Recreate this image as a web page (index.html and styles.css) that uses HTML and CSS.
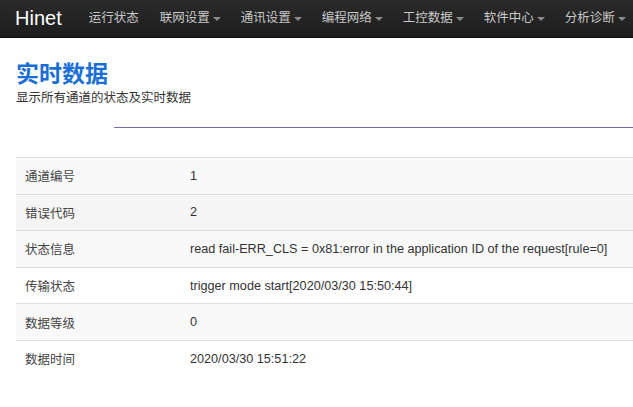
FILE: index.html
```html
<!DOCTYPE html>
<html lang="zh-CN">
<head>
<meta charset="utf-8">
<title>Hinet</title>
<link rel="stylesheet" href="styles.css">
</head>
<body>
<div class="navbar">
  <a class="brand">Hinet</a>
  <ul class="nav">
    <li><a>运行状态</a></li>
    <li><a>联网设置<b class="caret"></b></a></li>
    <li><a>通讯设置<b class="caret"></b></a></li>
    <li><a>编程网络<b class="caret"></b></a></li>
    <li><a>工控数据<b class="caret"></b></a></li>
    <li><a>软件中心<b class="caret"></b></a></li>
    <li><a>分析诊断<b class="caret"></b></a></li>
  </ul>
</div>
<div class="content">
  <div class="page-header">
    <h1 class="title">实时数据</h1>
    <p class="subtitle">显示所有通道的状态及实时数据</p>
  </div>
  <div class="divider"></div>
  <table class="data-table">
    <tr class="odd"><td class="label">通道编号</td><td>1</td></tr>
    <tr class="hover"><td class="label">错误代码</td><td>2</td></tr>
    <tr class="odd"><td class="label">状态信息</td><td>read fail-ERR_CLS = 0x81:error in the application ID of the request[rule=0]</td></tr>
    <tr><td class="label">传输状态</td><td>trigger mode start[2020/03/30 15:50:44]</td></tr>
    <tr class="odd"><td class="label">数据等级</td><td>0</td></tr>
    <tr><td class="label">数据时间</td><td>2020/03/30 15:51:22</td></tr>
  </table>
</div>
</body>
</html>
```
FILE: styles.css
```css
html, body {
  margin: 0;
  padding: 0;
  background: #fff;
  font-family: "Liberation Sans", "Noto Sans CJK SC", sans-serif;
  font-size: 13px;
  color: #333;
  overflow: hidden;
}
.navbar {
  height: 37px;
  background: linear-gradient(#2a2a2a, #1d1d1d);
  border-bottom: 1px solid #0c0c0c;
  display: flex;
  align-items: center;
  white-space: nowrap;
}
.brand {
  color: #fff;
  font-size: 20px;
  padding: 0 17px 0 15px;
  line-height: 37px;
}
.nav {
  display: flex;
  list-style: none;
  margin: 0;
  padding: 0;
}
.nav li a {
  display: flex;
  align-items: center;
  color: #c8c8c8;
  padding: 0 10px;
  line-height: 37px;
  font-size: 12.5px;
}
.nav li:first-child a {
  padding-right: 11px;
}
.caret {
  display: inline-block;
  width: 0;
  height: 0;
  margin-left: 3px;
  margin-top: 1px;
  border-top: 4px solid #8a8a8a;
  border-left: 4px solid transparent;
  border-right: 4px solid transparent;
}
.content {
  padding: 0 0 0 16px;
}
.page-header {
  padding-top: 21px;
}
.title {
  margin: 0;
  font-size: 23px;
  line-height: 30px;
  font-weight: bold;
  color: #1a6fd6;
}
.subtitle {
  margin: 1px 0 0;
  font-size: 12.5px;
  line-height: 16px;
  color: #333;
}
.divider {
  margin: 21px 0 0 98px;
  height: 1px;
  background: #7a6aa8;
}
.data-table {
  margin-top: 29px;
  width: 617px;
  border-collapse: collapse;
  table-layout: fixed;
}
.data-table td {
  border-top: 1px solid #dddddd;
  height: 35.6px;
  padding: 0 9px;
  color: #333;
  font-size: 12.65px;
  vertical-align: middle;
  white-space: nowrap;
}
.data-table td.label {
  width: 147px;
  color: #444;
  font-size: 12.5px;
}
.data-table tr.odd td {
  background: #f9f9f9;
}
.data-table tr.hover td {
  background: #f5f5f5;
}
```
